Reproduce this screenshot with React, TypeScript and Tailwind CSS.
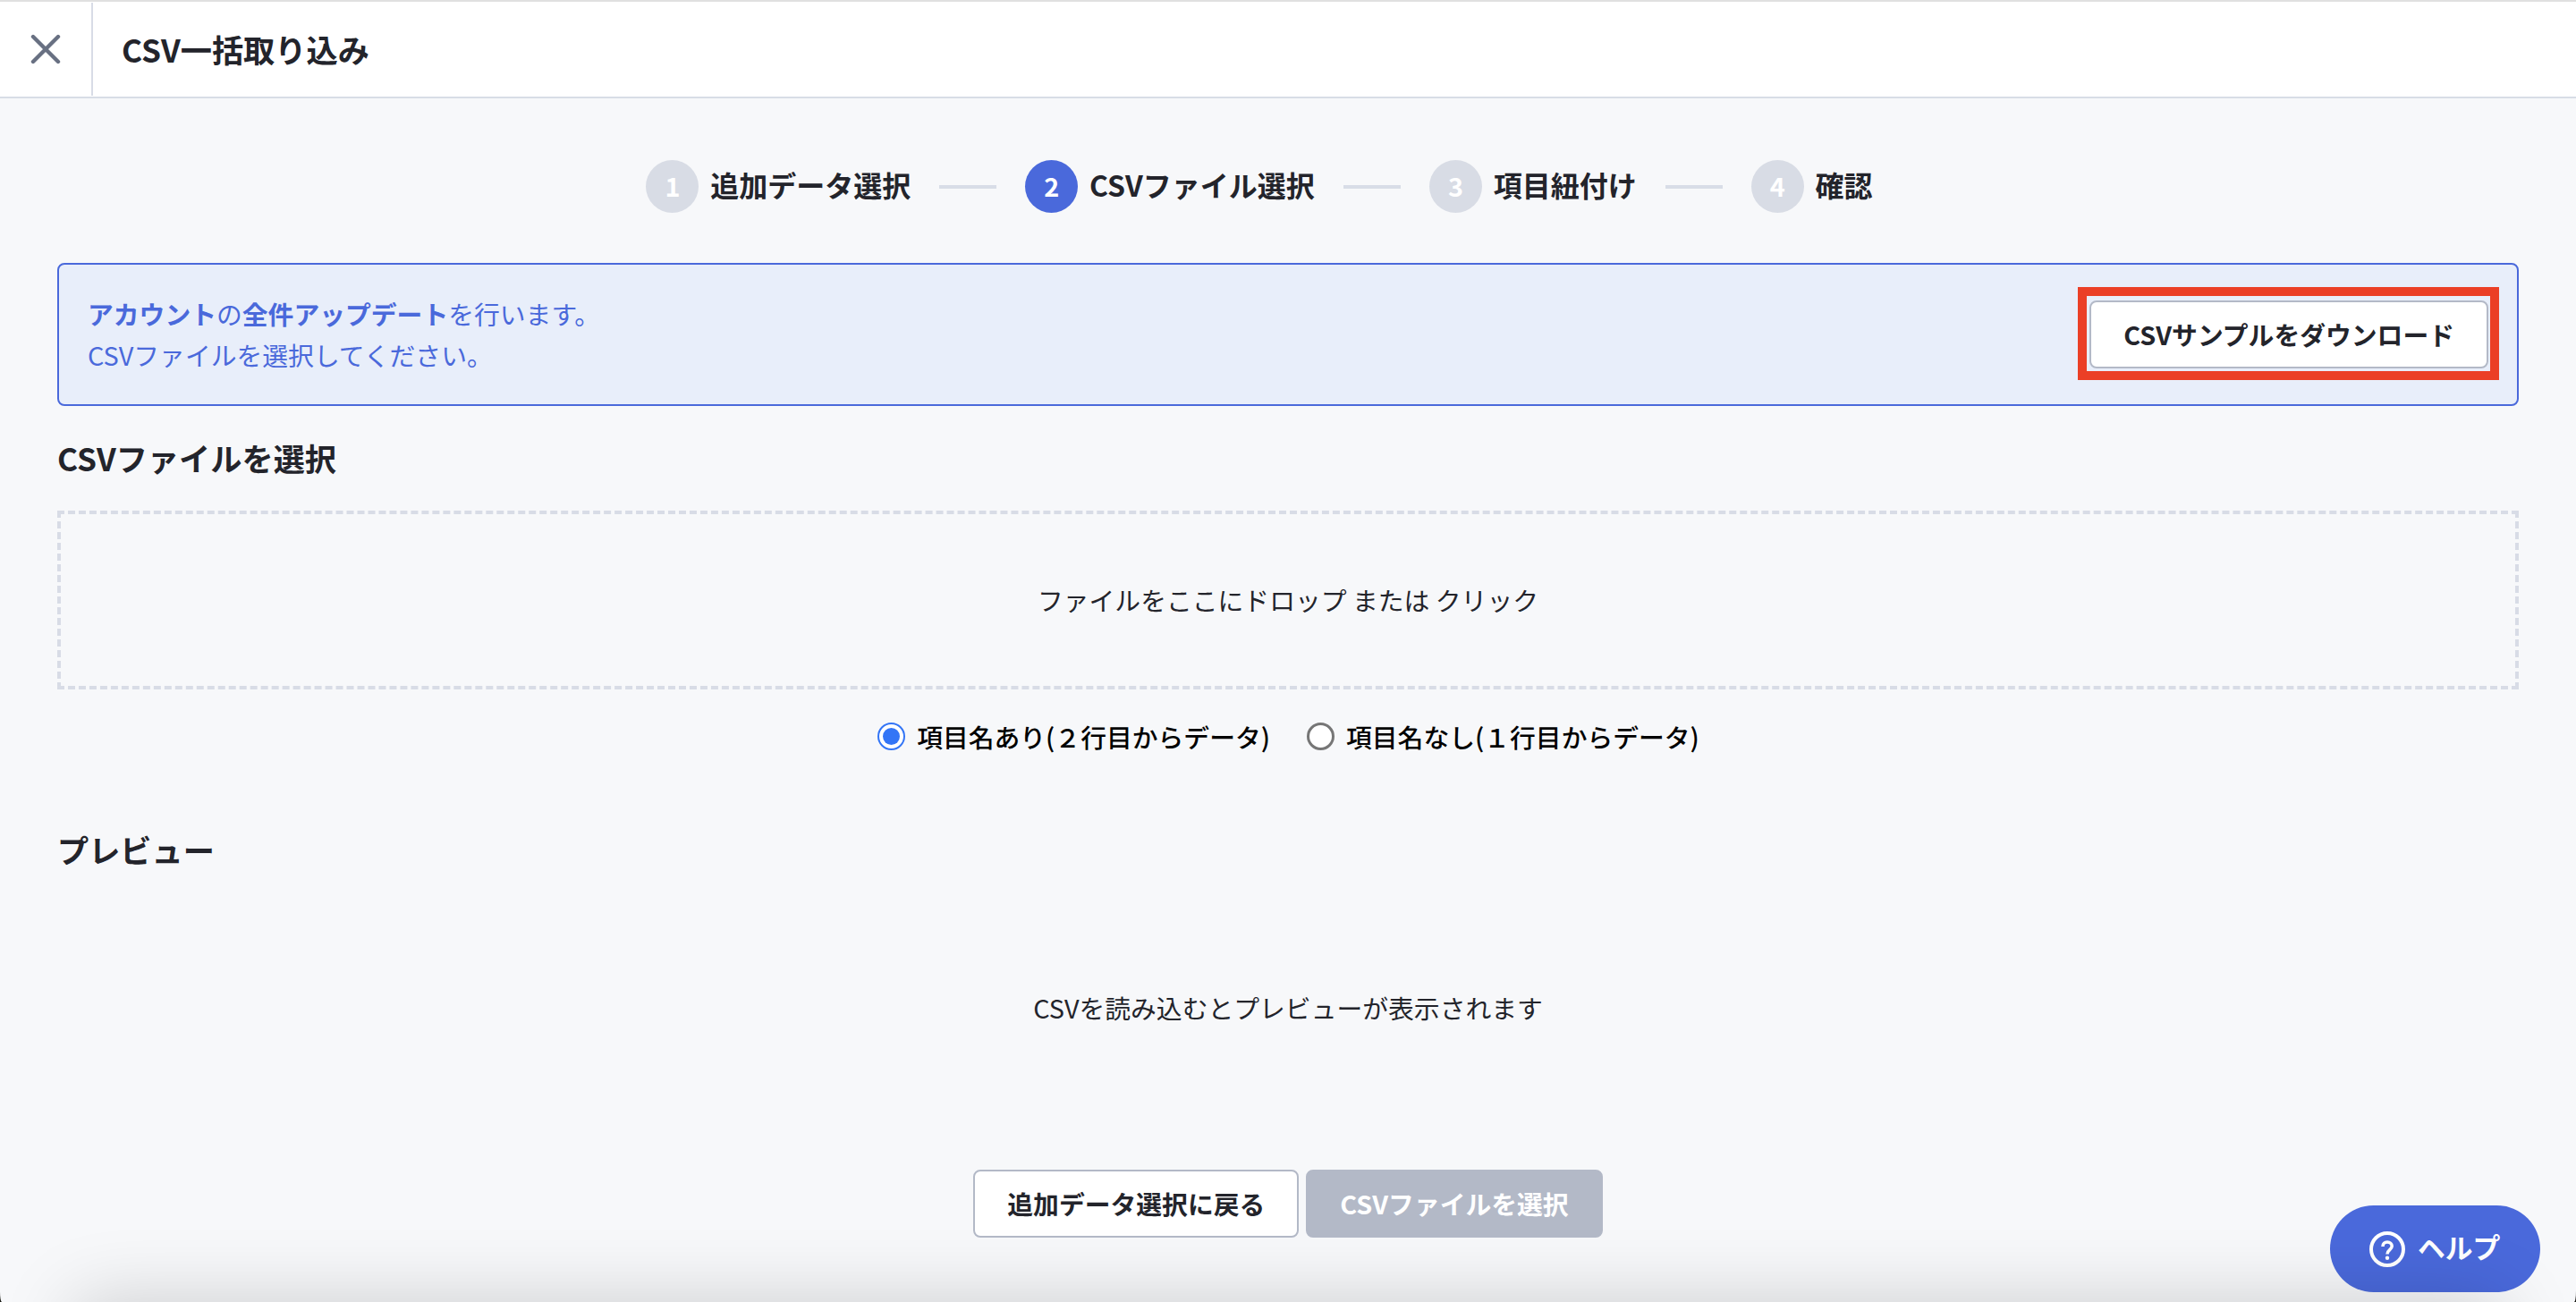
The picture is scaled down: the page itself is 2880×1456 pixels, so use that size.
import { Fragment } from "react";

const steps = ["追加データ選択", "CSVファイル選択", "項目紐付け", "確認"];
const activeStep = 1;

function Header() {
  return (
    <header className="flex h-[110px] shrink-0 items-stretch border-t-2 border-b-2 border-t-[#e0e0e0] border-b-[#d8dde6] bg-white">
      <button aria-label="閉じる" className="my-px flex w-[104px] items-center justify-center border-r-2 border-[#d8dce6]">
        <svg viewBox="0 0 34 34" className="h-[34px] w-[34px]" fill="none" stroke="#687082" strokeWidth="4.4" strokeLinecap="round">
          <path d="M3 3 31 31M31 3 3 31" />
        </svg>
      </button>
      <h1 className="flex items-center pl-8 text-[35.2px] leading-none font-bold">CSV一括取り込み</h1>
    </header>
  );
}

function Stepper() {
  return (
    <ol className="mt-[69px] flex h-[59px] items-center justify-center pr-16">
      {steps.map((label, i) => (
        <Fragment key={label}>
          {i > 0 && <li aria-hidden className="mx-8 h-1 w-16 bg-[#d8dde7]" />}
          <li className="flex items-center">
            <span
              className={
                i === activeStep
                  ? "flex size-[59px] items-center justify-center rounded-full bg-[#4a69db] pb-px text-[28.8px] font-bold text-white"
                  : "flex size-[59px] items-center justify-center rounded-full bg-[#d8dce5] pb-px text-[28.8px] font-bold text-white"
              }
            >
              {i + 1}
            </span>
            <span className="ml-[12.8px] pb-1.5 text-[32px] leading-none font-bold">{label}</span>
          </li>
        </Fragment>
      ))}
    </ol>
  );
}

function Radio({ label, checked }: { label: string; checked?: boolean }) {
  return (
    <label className="flex items-center gap-[13px] font-medium text-black">
      <span
        className={
          checked
            ? "flex size-[31px] items-center justify-center rounded-full border-2 border-[#3375f6] bg-white"
            : "flex size-[31px] items-center justify-center rounded-full border-3 border-[#767676] bg-white"
        }
      >
        {checked && <span className="size-[19px] rounded-full bg-[#3375f6]" />}
      </span>
      <span className="pt-0.5">{label}</span>
    </label>
  );
}

export default function App() {
  return (
    <div className="h-[1456px] w-[2880px] bg-[#1a1c16]">
      <div
        lang="ja"
        className="relative flex h-[1456px] w-[2880px] flex-col overflow-hidden rounded-b-[2px_12px] bg-[#f7f8fa] font-['Noto_Sans_CJK_JP',sans-serif] text-[28.8px] text-[#23242b]"
      >
        <Header />
        <main className="flex flex-col px-16">
          <Stepper />

          <section className="mt-14 flex h-40 items-center justify-between rounded-lg border-2 border-[#4a69db] bg-[#e8eefa] px-8 text-[#4a69db]">
            <p className="leading-[46px]">
              <b>アカウント</b>の<b>全件アップデート</b>を行います。
              <br />
              CSVファイルを選択してください。
            </p>
            <div className="relative">
              <button className="h-[76px] rounded-lg border-2 border-[#b3b9c7] bg-white px-9 font-bold text-[#23242b]">
                CSVサンプルをダウンロード
              </button>
              <span className="pointer-events-none absolute -top-[15px] -right-3 -bottom-[13px] -left-[13px] border-10 border-[#eb3f26]" />
            </div>
          </section>

          <h2 className="mt-[30px] h-14 text-[35.2px] leading-14 font-bold">CSVファイルを選択</h2>
          <div className="mt-[31px] flex h-[200px] items-center justify-center border-4 border-dashed border-[#d8dce6]">
            ファイルをここにドロップ または クリック
          </div>
          <div className="mt-[30px] flex h-11 items-center justify-center gap-[41px] pl-px">
            <Radio label="項目名あり(２行目からデータ)" checked />
            <Radio label="項目名なし(１行目からデータ)" />
          </div>

          <h2 className="mt-[77px] h-14 text-[35.2px] leading-14 font-bold">プレビュー</h2>
          <p className="mt-[127px] h-11 text-center leading-11">CSVを読み込むとプレビューが表示されます</p>

          <div className="mt-[159px] flex justify-center gap-2">
            <button className="h-[76px] rounded-lg border-2 border-[#b3b9c7] bg-white px-9 font-bold">追加データ選択に戻る</button>
            <button className="h-[76px] rounded-lg border-2 border-[#b3b9c7] bg-[#b3b9c7] px-9 font-bold text-white">CSVファイルを選択</button>
          </div>
        </main>

        <button className="absolute right-10 bottom-[11px] flex h-[97px] w-[235px] items-center rounded-full bg-[#4a69db] pl-11 text-[30.8px] font-bold text-white">
          <svg viewBox="0 0 40 40" className="mr-3.5 size-10" fill="none" stroke="white">
            <circle cx="20" cy="20" r="18" strokeWidth="4" />
            <path d="M15 17c0-3 2-5 5-5s5.2 1.9 5.2 4.6c0 4-5.2 4.2-5.2 8.8" strokeWidth="3.6" />
            <circle cx="20" cy="29.8" r="2.2" fill="white" stroke="none" />
          </svg>
          <span className="pb-1">ヘルプ</span>
        </button>

        <div className="pointer-events-none absolute top-full right-[84px] left-[84px] h-40 shadow-[0_0_84px_rgba(0,0,0,0.18)]" />
      </div>
    </div>
  );
}
